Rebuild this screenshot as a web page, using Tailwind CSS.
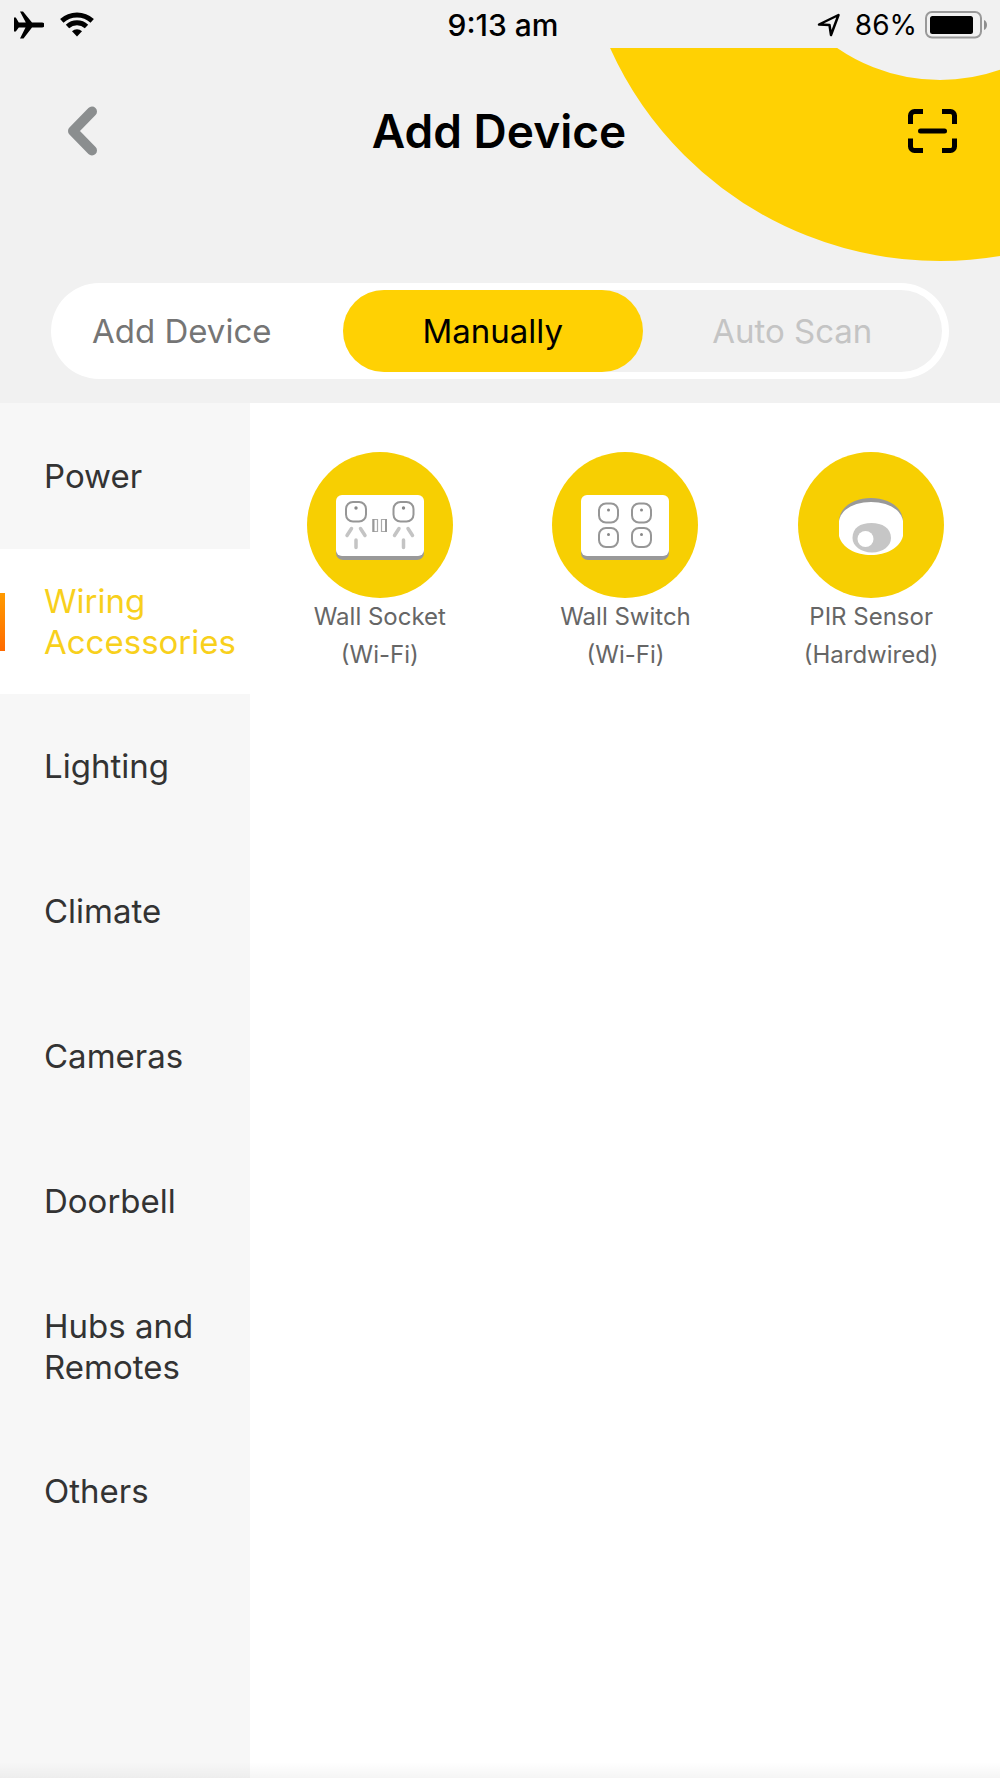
<!DOCTYPE html>
<html lang="en">
<head>
  <meta charset="UTF-8" />
  <meta name="viewport" content="width=device-width, initial-scale=1.0" />
  <title>Add Device</title>
  <script src="https://cdn.jsdelivr.net/npm/@tailwindcss/browser@4"></script>
</head>
<body class="relative min-h-screen flex flex-col bg-white font-['Inter',sans-serif] text-black">
  <header class="relative bg-[#f1f1f1] pb-6 overflow-hidden">
    <!-- Ring decoration -->
    <div class="absolute inset-x-0 top-12 h-56 overflow-hidden">
      <svg class="absolute right-0 top-0" width="400" height="224" viewBox="600 48 400 224" fill="none">
        <circle cx="940" cy="-101" r="271.5" stroke="#ffd103" stroke-width="181" />
      </svg>
    </div>

    <!-- Status bar -->
    <div class="relative grid grid-cols-[1fr_auto_1fr] items-center h-12 pt-px pl-[18px] pr-3">
      <div class="flex items-center gap-4 -ml-1">
        <svg width="30" height="28" viewBox="0 0 30 28" aria-label="Airplane mode">
          <path d="M0 6.500h1.800l3 5h7L6 .5h3l9 11h10a2.500 2.500 0 0 1 0 5H18l-8.500 11H6l5.500-11H4.800l-3 4H0z" />
        </svg>
        <svg width="34" height="25" viewBox="0 0 34 25" fill="none" stroke="#000" aria-label="Wi-Fi">
          <path d="M1.800 8.800a22.500 22.500 0 0 1 30.400 0" stroke-width="5" />
          <path d="M7.500 14.500a14.200 14.200 0 0 1 19 0" stroke-width="5" />
          <path d="M12 19.300a7.300 7.300 0 0 1 10 0L17 24.500z" fill="#000" stroke="none" />
        </svg>
      </div>
      <div class="text-center text-[30px] leading-9 font-medium pt-px">9:13 am</div>
      <div class="flex items-center justify-end gap-2">
        <svg class="mr-1.5" width="24" height="24" viewBox="0 0 24 24" fill="none" stroke="#000" stroke-width="2.500" stroke-linejoin="round" aria-label="Location">
          <path d="M2 11.500 21.500 2 14 22l-1.500-10z" />
        </svg>
        <span class="text-[28px] leading-9 pt-px">86%</span>
        <svg width="63" height="28" viewBox="0 0 63 28" aria-label="Battery">
          <rect x="1" y="1" width="55" height="25.500" rx="6" fill="none" stroke="#999" stroke-width="2" />
          <rect x="5" y="5" width="43" height="18" rx="2.500" />
          <path d="M59 9c4 1.500 4 8.500 0 10z" fill="#8e8e8e" />
        </svg>
      </div>
    </div>

    <!-- Title bar -->
    <nav class="relative grid grid-cols-[1fr_auto_1fr] items-center h-[166px] pl-[68px] pr-[43px]">
      <button type="button" aria-label="Back" class="justify-self-start">
        <svg width="30" height="50" viewBox="0 0 30 50" fill="none" stroke="#8b8e8f" stroke-width="10" stroke-linecap="round" stroke-linejoin="round">
          <path d="M24 5.500 5 25l19 19.500" />
        </svg>
      </button>
      <h1 class="text-[46px] leading-14 font-semibold pr-[27px]">Add Device</h1>
      <button type="button" aria-label="Scan code" class="justify-self-end">
        <svg width="49" height="44" viewBox="0 0 49 44" fill="none" stroke="#000" stroke-width="5">
          <path d="M2.500 15V6.500a4 4 0 0 1 4-4H15M34 2.500h8.500a4 4 0 0 1 4 4V15M46.500 29.500v8a4 4 0 0 1-4 4H34M15 41.500H6.500a4 4 0 0 1-4-4v-8" />
          <path d="M12.500 22h24" stroke-linecap="round" />
        </svg>
      </button>
    </nav>

    <!-- Mode switch -->
    <div class="relative mt-[69px] mx-[51px] grid grid-cols-[285fr_599fr] items-center rounded-full bg-white p-[7px] text-[33px] leading-[42px]">
      <span class="pl-[34px] text-[#757575]">Add Device</span>
      <div class="grid grid-cols-2 rounded-full bg-[#f1f1f1]">
        <button type="button" class="rounded-full bg-[#ffd103] py-5">Manually</button>
        <button type="button" class="rounded-full py-5 text-[#c4c4c4]">Auto Scan</button>
      </div>
    </div>
  </header>

  <main class="flex-1 flex">
    <!-- Categories -->
    <aside class="w-1/4 bg-[#f7f7f7] pt-px text-[33px] leading-[41px] text-[#333]">
      <a href="#" class="flex items-center h-[145px] pl-11">Power</a>
      <a href="#" class="relative flex items-center h-[145px] pl-11 bg-white text-[#f8d01c]">
        <span class="absolute left-0 w-[5px] h-[58px] bg-linear-to-b from-[#ff9a00] to-[#ff6a00]"></span>
        Wiring<br />Accessories
      </a>
      <a href="#" class="flex items-center h-[145px] pl-11">Lighting</a>
      <a href="#" class="flex items-center h-[145px] pl-11">Climate</a>
      <a href="#" class="flex items-center h-[145px] pl-11">Cameras</a>
      <a href="#" class="flex items-center h-[145px] pl-11">Doorbell</a>
      <a href="#" class="flex items-center h-[145px] pl-11">Hubs and Remotes</a>
      <a href="#" class="flex items-center h-[145px] pl-11">Others</a>
    </aside>

    <!-- Devices -->
    <section class="flex-1 grid grid-cols-3 content-start pl-[7px] pr-[6px] pt-[49px] text-center text-[24px] leading-[38px] text-[#666]">
      <a href="#" class="flex flex-col items-center">
        <svg width="146" height="146" viewBox="0 0 146 146" fill="none">
          <circle cx="73" cy="73" r="73" fill="#f7cf02" />
          <rect x="29" y="47" width="88" height="61" rx="7" fill="#999" />
          <rect x="29" y="43" width="88" height="61" rx="6" fill="#fff" />
          <g stroke="#969696" stroke-width="2">
            <rect x="39" y="50" width="20" height="19.500" rx="7" />
            <rect x="86.500" y="50" width="20" height="19.500" rx="7" />
          </g>
          <circle cx="49" cy="56" r="1.700" fill="#888" />
          <circle cx="96.500" cy="56" r="1.700" fill="#888" />
          <path d="M44.500 76.500 40 83.500M53.500 76.500l4.500 7M49 88v7.500M92 76.500l-4.500 7M101 76.500l4.500 7M96.500 88v7.500" stroke="#c4c4c4" stroke-width="3.500" stroke-linecap="round" />
          <path d="M66 67.500h4.500v12H66zM74.500 67.500H79v12h-4.500z" stroke="#aaa" stroke-width="1.200" />
          <path d="M66.500 67v13M79 67v13" stroke="#999" stroke-width="2" />
        </svg>
        <span>Wall Socket<br />(Wi-Fi)</span>
      </a>
      <a href="#" class="flex flex-col items-center">
        <svg width="146" height="146" viewBox="0 0 146 146" fill="none">
          <circle cx="73" cy="73" r="73" fill="#f7cf02" />
          <rect x="29" y="47" width="88" height="61" rx="7" fill="#999" />
          <rect x="29" y="43" width="88" height="61" rx="6" fill="#fff" />
          <g stroke="#969696" stroke-width="2">
            <rect x="47" y="51.500" width="19" height="19" rx="7" />
            <rect x="80" y="51.500" width="19" height="19" rx="7" />
            <rect x="47" y="76" width="19" height="19" rx="7" />
            <rect x="80" y="76" width="19" height="19" rx="7" />
          </g>
          <g fill="#888">
            <circle cx="56.500" cy="58" r="1.500" />
            <circle cx="89.500" cy="58" r="1.500" />
            <circle cx="56.500" cy="82.500" r="1.500" />
            <circle cx="89.500" cy="82.500" r="1.500" />
          </g>
        </svg>
        <span>Wall Switch<br />(Wi-Fi)</span>
      </a>
      <a href="#" class="flex flex-col items-center">
        <svg width="146" height="146" viewBox="0 0 146 146">
          <circle cx="73" cy="73" r="73" fill="#f7cf02" />
          <path d="M41 70C41 54 57 46 73 46s32 8 32 24z" fill="#999" />
          <path d="M41 69C43 57 57 50 73 50s30 7 32 19v15c-3 12-17 19-32 19s-29-7-32-19z" fill="#fff" />
          <path d="M73.500 71C84 71 93 76 93 86c0 8-8 14.500-19 14.500S54.500 94 54.500 86C54.500 76 62 71 73.500 71z" fill="#c6c6c6" />
          <circle cx="67.500" cy="87" r="8" fill="#fff" />
        </svg>
        <span>PIR Sensor<br />(Hardwired)</span>
      </a>
    </section>
  </main>

  <div class="absolute inset-x-0 bottom-0 h-4 bg-linear-to-b from-black/0 to-black/4 pointer-events-none"></div>
</body>
</html>
